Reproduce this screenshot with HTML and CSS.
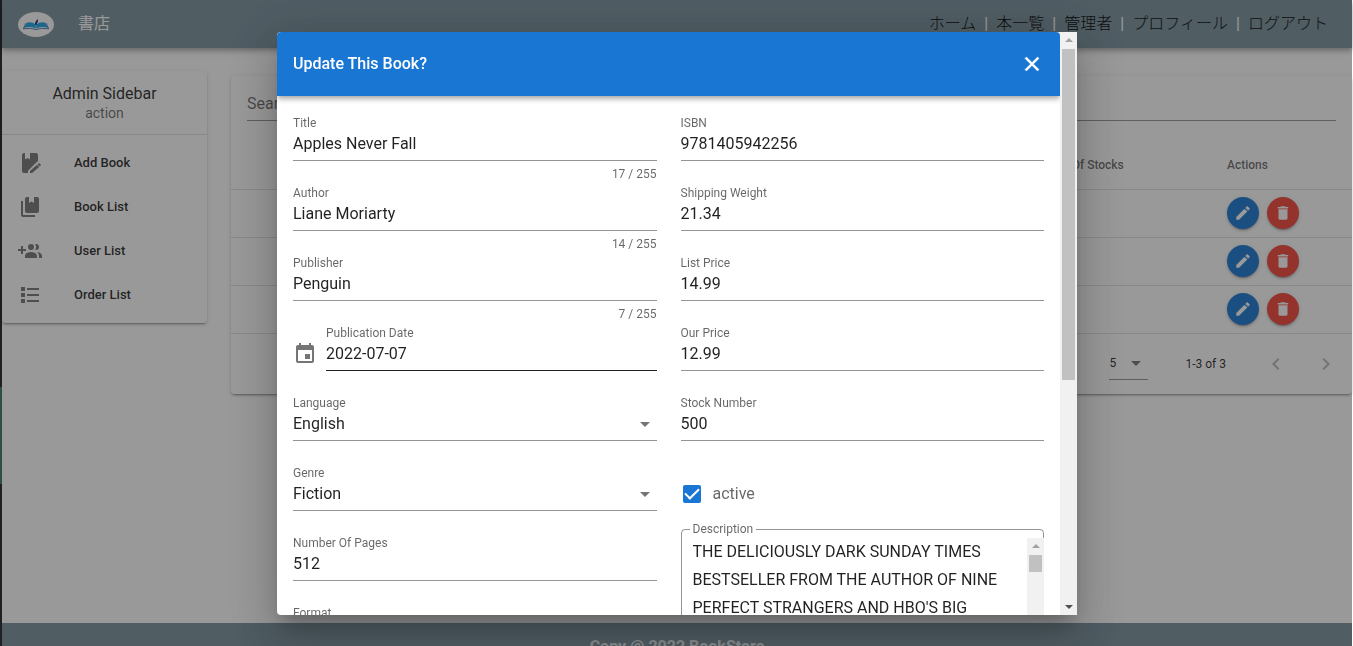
FILE: index.html
```html
<!DOCTYPE html>
<html lang="ja">
<head>
<meta charset="utf-8">
<title>書店</title>
<link rel="stylesheet" href="styles.css">
</head>
<body>
<svg class="sprite" aria-hidden="true">
  <symbol id="pencil" viewBox="0 0 24 24"><path d="M20.71,7.04C21.1,6.65 21.1,6 20.71,5.63L18.37,3.29C18,2.9 17.35,2.9 16.96,3.29L15.12,5.12L18.87,8.87M3,17.25V21H6.75L17.81,9.93L14.06,6.18L3,17.25Z"/></symbol>
  <symbol id="trash" viewBox="0 0 24 24"><path d="M19,4H15.5L14.5,3H9.5L8.5,4H5V6H19M6,19A2,2 0 0,0 8,21H16A2,2 0 0,0 18,19V7H6V19Z"/></symbol>
  <symbol id="caret" viewBox="0 0 24 24"><path d="M7,10L12,15L17,10H7Z"/></symbol>
</svg>
<div class="app">
  <header class="topbar">
    <svg class="logo" viewBox="0 0 36 25" aria-hidden="true">
      <ellipse cx="18" cy="12.5" rx="18" ry="12.5" fill="#fff"/>
      <path d="M9 10.500Q14 9.500 17.700 12.500V16.500Q12 14 6 16Z" fill="#16a5e6"/>
      <path d="M27 10.500Q22 9.500 18.300 12.500V16.500Q24 14 30 16Z" fill="#16a5e6"/>
      <path d="M8 11L5.300 16.800Q13 15.500 18 17.500Q23 15.500 30.700 16.800L28 11" fill="none" stroke="#2a5a9c" stroke-width="0.800"/>
      <path d="M17 13Q16.500 9.500 20 7Q20.500 10.500 18.300 13Z" fill="#1a2f86"/>
    </svg>
    <h1 class="brand">書店</h1>
    <nav class="nav">
      <a href="#">ホーム</a><span>|</span><a href="#">本一覧</a><span>|</span><a href="#">管理者</a><span>|</span><a href="#">プロフィール</a><span>|</span><a href="#">ログアウト</a>
    </nav>
  </header>

  <main class="main">
    <aside class="card sidebar">
      <div class="sidebar-head">
        <h2>Admin Sidebar</h2>
        <p>action</p>
      </div>
      <nav class="menu">
        <a href="#"><svg class="icon" viewBox="0 0 24 24"><path d="M6 2H7V8.500L9.500 7L12 8.500V2H18C19.100 2 20 2.900 20 4V10.200C19.500 10.300 19.100 10.600 18.800 10.900L10 19.700V22H6C4.900 22 4 21.100 4 20V4C4 2.900 4.900 2 6 2ZM22.700 14.400L21.700 15.400L19.600 13.300L20.600 12.300C20.800 12.100 21.200 12.100 21.400 12.300L22.700 13.600C22.900 13.800 22.900 14.100 22.700 14.400M12 19.900V22H14.100L21.200 15.900L19.100 13.800Z"/></svg>Add Book</a>
        <a href="#"><svg class="icon" viewBox="0 0 24 24"><path d="M3 6V20C3 21.100 3.900 22 5 22H17V20H5V6ZM9 2H11V8L13.500 6.500L16 8V2H19C20.100 2 21 2.900 21 4V16C21 17.100 20.100 18 19 18H9C7.900 18 7 17.100 7 16V4C7 2.900 7.900 2 9 2Z"/></svg>Book List</a>
        <a href="#"><svg class="icon" viewBox="0 0 24 24"><path d="M19 17V19H7V17S7 13 13 13 19 17 19 17M16 8A3 3 0 1 0 13 11A3 3 0 0 0 16 8M19.2 13.06A5.6 5.6 0 0 1 21 17V19H24V17S24 13.55 19.2 13.06M18 5A2.91 2.91 0 0 0 17.11 5.14A5 5 0 0 1 17.11 10.86A2.91 2.91 0 0 0 18 11A3 3 0 0 0 18 5M8 10H5V7H3V10H0V12H3V15H5V12H8Z"/></svg>User List</a>
        <a href="#"><svg class="icon" viewBox="0 0 24 24"><path d="M3,4H7V8H3V4M9,5V7H21V5H9M3,10H7V14H3V10M9,11V13H21V11H9M3,16H7V20H3V16M9,17V19H21V17H9"/></svg>Order List</a>
      </nav>
    </aside>

    <section class="card books">
      <div class="search"><input type="text" placeholder="Search" aria-label="Search"></div>
      <table class="table">
        <thead><tr><th></th><th class="col-stock">No. Of Stocks</th><th class="col-actions">Actions</th></tr></thead>
        <tbody>
          <tr><td></td><td></td><td><div class="actions"><button class="fab" aria-label="Edit"><svg><use href="#pencil"/></svg></button><button class="fab fab-red" aria-label="Delete"><svg><use href="#trash"/></svg></button></div></td></tr>
          <tr><td></td><td></td><td><div class="actions"><button class="fab" aria-label="Edit"><svg><use href="#pencil"/></svg></button><button class="fab fab-red" aria-label="Delete"><svg><use href="#trash"/></svg></button></div></td></tr>
          <tr><td></td><td></td><td><div class="actions"><button class="fab" aria-label="Edit"><svg><use href="#pencil"/></svg></button><button class="fab fab-red" aria-label="Delete"><svg><use href="#trash"/></svg></button></div></td></tr>
        </tbody>
      </table>
      <div class="pager">
        <div class="page-size"><select aria-label="Rows per page"><option>5</option></select><svg class="icon"><use href="#caret"/></svg></div>
        <span class="range">1-3 of 3</span>
        <button class="page-btn" aria-label="Previous page" disabled><svg class="icon" viewBox="0 0 24 24"><path d="M15.41,16.58L10.83,12L15.41,7.41L14,6L8,12L14,18L15.41,16.58Z"/></svg></button>
        <button class="page-btn" aria-label="Next page" disabled><svg class="icon" viewBox="0 0 24 24"><path d="M8.59,16.58L13.17,12L8.59,7.41L10,6L16,12L10,18L8.59,16.58Z"/></svg></button>
      </div>
    </section>
  </main>

  <footer class="footer">Copy @ 2022 BookStore</footer>
</div>

<div class="overlay">
  <div class="dialog" role="dialog" aria-modal="true" aria-labelledby="dialog-title">
    <div class="dialog-body">
      <div class="dialog-head">
        <h2 id="dialog-title">Update This Book?</h2>
        <button class="close" aria-label="Close"><svg viewBox="0 0 24 24"><path d="M19,6.41L17.59,5L12,10.59L6.41,5L5,6.41L10.59,12L5,17.59L6.41,19L12,13.41L17.59,19L19,17.59L13.41,12L19,6.41Z"/></svg></button>
      </div>
      <form class="form">
        <div class="form-col">
          <div class="field"><label for="title">Title</label><div class="control"><input id="title" type="text" value="Apples Never Fall"></div><div class="counter">17 / 255</div></div>
          <div class="field"><label for="author">Author</label><div class="control"><input id="author" type="text" value="Liane Moriarty"></div><div class="counter">14 / 255</div></div>
          <div class="field"><label for="publisher">Publisher</label><div class="control"><input id="publisher" type="text" value="Penguin"></div><div class="counter">7 / 255</div></div>
          <div class="dated">
            <svg class="icon" viewBox="0 0 24 24"><path d="M19,19H5V8H19M16,1V3H8V1H6V3H5C3.89,3 3,3.89 3,5V19A2,2 0 0,0 5,21H19A2,2 0 0,0 21,19V5C21,3.89 20.1,3 19,3H18V1M17,12H12V17H17V12Z"/></svg>
            <div class="field"><label for="date">Publication Date</label><div class="control control-active"><input id="date" type="text" value="2022-07-07" readonly></div></div>
          </div>
          <div class="field"><label for="language">Language</label><div class="control"><select id="language"><option>English</option></select><svg class="icon"><use href="#caret"/></svg></div></div>
          <div class="field"><label for="genre">Genre</label><div class="control"><select id="genre"><option>Fiction</option></select><svg class="icon"><use href="#caret"/></svg></div></div>
          <div class="field"><label for="pages">Number Of Pages</label><div class="control"><input id="pages" type="text" value="512"></div></div>
          <div class="field"><label for="format">Format</label><div class="control"><select id="format"><option></option></select><svg class="icon"><use href="#caret"/></svg></div></div>
        </div>
        <div class="form-col">
          <div class="field"><label for="isbn">ISBN</label><div class="control"><input id="isbn" type="text" value="9781405942256"></div></div>
          <div class="field"><label for="weight">Shipping Weight</label><div class="control"><input id="weight" type="text" value="21.34"></div></div>
          <div class="field"><label for="list-price">List Price</label><div class="control"><input id="list-price" type="text" value="14.99"></div></div>
          <div class="field"><label for="our-price">Our Price</label><div class="control"><input id="our-price" type="text" value="12.99"></div></div>
          <div class="field"><label for="stock">Stock Number</label><div class="control"><input id="stock" type="text" value="500"></div></div>
          <label class="check">
            <input type="checkbox" checked>
            active
          </label>
          <fieldset class="outlined">
            <legend><label for="description">Description</label></legend>
            <div class="outlined-body">
              <textarea id="description" rows="5">THE DELICIOUSLY DARK SUNDAY TIMES
BESTSELLER FROM THE AUTHOR OF NINE
PERFECT STRANGERS AND HBO'S BIG</textarea>
              <div class="scrollbar" aria-hidden="true"><i class="arrow-up"></i><i class="thumb thumb-short"></i></div>
            </div>
          </fieldset>
        </div>
      </form>
    </div>
    <div class="scrollbar" aria-hidden="true"><i class="arrow-up"></i><i class="thumb"></i><i class="arrow-down"></i></div>
  </div>
</div>
</body>
</html>
```
FILE: styles.css
```css
* { box-sizing: border-box; }

html { overflow: hidden; background: #fff; }

body {
  margin: 0;
  padding: 0 1px 0 2px;
  font: 400 16px/24px Roboto, "Noto Sans CJK JP", sans-serif;
  color: rgba(0, 0, 0, 0.87);
  background: linear-gradient(#1f2022 0 387px, #2f4f45 387px 484px, #1f2022 484px) left / 2px 100% no-repeat;
}

h1, h2, p { margin: 0; font-weight: 400; }

a { color: inherit; text-decoration: none; }

input, select, textarea, button {
  margin: 0;
  padding: 0;
  border: 0;
  border-radius: 0;
  outline: 0;
  background: none;
  color: inherit;
  font: inherit;
  appearance: none;
}

.sprite { position: absolute; width: 0; height: 0; }

.icon {
  flex: none;
  width: 24px;
  height: 24px;
  fill: rgba(0, 0, 0, 0.54);
  pointer-events: none;
}

.app {
  display: flex;
  flex-direction: column;
  min-height: calc(100vh + 24px);
  background: #fff;
}

.topbar {
  display: flex;
  align-items: center;
  height: 48px;
  padding: 0 24px 0 16px;
  background: #78909c;
  box-shadow: 0 2px 4px -1px rgba(0, 0, 0, 0.2), 0 4px 5px rgba(0, 0, 0, 0.14), 0 1px 10px rgba(0, 0, 0, 0.12);
}

.logo { width: 36px; height: 25px; }

.brand {
  flex: 1;
  margin-left: 24px;
  font-size: 16px;
  color: #fff;
}

.nav { display: flex; font-weight: 300; color: #000; }
.nav span { width: 20px; text-align: center; color: #fff; font-weight: 400; }

.main {
  flex: 1;
  display: flex;
  align-items: flex-start;
  gap: 24px;
  padding-top: 23px;
}

.card {
  border-radius: 4px;
  background: #fff;
  box-shadow: 0 3px 1px -2px rgba(0, 0, 0, 0.2), 0 2px 2px rgba(0, 0, 0, 0.14), 0 1px 5px rgba(0, 0, 0, 0.12);
}

.sidebar { flex: none; width: 205px; }

.sidebar-head {
  padding: 13px 0 12px;
  border-bottom: 1px solid rgba(0, 0, 0, 0.12);
  text-align: center;
}
.sidebar-head h2 { font-size: 16px; line-height: 20px; }
.sidebar-head p { font-size: 14px; line-height: 18px; color: rgba(0, 0, 0, 0.6); }

.menu { padding: 6px 0; }
.menu a {
  display: flex;
  align-items: center;
  gap: 32px;
  height: 44px;
  padding: 0 16px;
  font-size: 13px;
  font-weight: 500;
}

.books { flex: 1; margin-top: 5px; }

.search { padding: 10px 16px 20px; }
.search input {
  display: block;
  width: 100%;
  height: 35px;
  border-bottom: 1px solid rgba(0, 0, 0, 0.42);
}
.search input::placeholder { color: rgba(0, 0, 0, 0.6); opacity: 1; }

.table { width: 100%; border-collapse: collapse; table-layout: fixed; }
.table th {
  height: 48px;
  padding: 0 16px;
  border-bottom: 1px solid rgba(0, 0, 0, 0.12);
  text-align: left;
  font-size: 12px;
  font-weight: 500;
  color: rgba(0, 0, 0, 0.6);
}
.table td { height: 48px; padding: 0 16px; border-bottom: 1px solid rgba(0, 0, 0, 0.12); }
.col-stock { width: 177px; }
.col-actions { width: 141px; }

.actions { display: flex; gap: 8px; }

.fab {
  display: grid;
  place-items: center;
  width: 32px;
  height: 32px;
  border-radius: 50%;
  background: #1976d2;
  box-shadow: 0 3px 1px -2px rgba(0, 0, 0, 0.2), 0 2px 2px rgba(0, 0, 0, 0.14), 0 1px 5px rgba(0, 0, 0, 0.12);
}
.fab svg { width: 18px; height: 18px; fill: #fff; }
.fab-red { background: #f44336; }

.pager {
  display: flex;
  align-items: center;
  justify-content: flex-end;
  height: 60px;
  padding-right: 8px;
  font-size: 12px;
}
.page-size {
  display: flex;
  align-items: center;
  width: 39px;
  height: 33px;
  border-bottom: 1px solid rgba(0, 0, 0, 0.42);
}
.page-size select { flex: 1; min-width: 0; }
.range { margin: 0 32px 0 37px; }
.page-btn { display: grid; place-items: center; width: 36px; height: 36px; opacity: 0.5; }
.page-btn + .page-btn { margin-left: 14px; }

.footer {
  height: 47px;
  background: #78909c;
  color: rgba(255, 255, 255, 0.8);
  font-weight: 700;
  line-height: 48px;
  text-align: center;
}

.overlay {
  position: fixed;
  inset: 0 1px 0 2px;
  display: flex;
  justify-content: center;
  padding: 32px 24px 31px;
  background: rgba(33, 33, 33, 0.46);
}

.dialog {
  display: flex;
  width: 100%;
  max-width: 800px;
  border-radius: 4px 0 0 4px;
  background: #fff;
  overflow: hidden;
  box-shadow: 0 11px 15px -7px rgba(0, 0, 0, 0.2), 0 24px 38px 3px rgba(0, 0, 0, 0.14), 0 9px 46px 8px rgba(0, 0, 0, 0.12);
}

.dialog-body { flex: 1; min-width: 0; overflow: hidden; }

.dialog-head {
  display: flex;
  align-items: center;
  justify-content: space-between;
  height: 64px;
  padding: 0 16px;
  border-radius: 4px 4px 0 0;
  background: #1976d2;
  color: #fff;
  box-shadow: 0 2px 4px -1px rgba(0, 0, 0, 0.2), 0 4px 5px rgba(0, 0, 0, 0.14), 0 1px 10px rgba(0, 0, 0, 0.12);
}
.dialog-head h2 { font-size: 16px; font-weight: 500; }
.close { width: 24px; height: 24px; }
.close svg { display: block; fill: #fff; stroke: #fff; stroke-width: 0.5px; }

.form { display: flex; gap: 24px; padding: 19px 16px; }
.form-col { flex: 1; min-width: 0; }

.field { height: 70px; }
.field label {
  display: block;
  font-size: 12px;
  line-height: 16px;
  color: rgba(0, 0, 0, 0.6);
}
.control {
  display: flex;
  height: 30px;
  padding-bottom: 3px;
  border-bottom: 1px solid rgba(0, 0, 0, 0.42);
}
.control input, .control select { flex: 1; min-width: 0; }
.control .icon { margin-top: 1px; }
.control-active { border-color: rgba(0, 0, 0, 0.87); }
.counter {
  font-size: 12px;
  line-height: 26px;
  text-align: right;
  color: rgba(0, 0, 0, 0.6);
}

.dated { display: flex; gap: 9px; }
.dated .icon { margin-top: 17px; }
.dated .field { flex: 1; }

.check {
  display: flex;
  align-items: center;
  gap: 12px;
  height: 57px;
  padding-left: 2px;
  color: rgba(0, 0, 0, 0.6);
}
.check input {
  display: grid;
  place-items: center;
  width: 18px;
  height: 18px;
  border-radius: 2px;
  background: #1976d2;
}
.check input::before {
  content: "";
  width: 12px;
  height: 6px;
  margin-bottom: 4px;
  border: solid #fff;
  border-width: 0 0 2px 2px;
  transform: rotate(-45deg);
}

.outlined {
  min-width: 0;
  margin: 0;
  padding: 2px 0 0 11px;
  border: 1px solid rgba(0, 0, 0, 0.42);
  border-radius: 4px;
}
.outlined legend {
  margin-left: -3px;
  padding: 0 3px;
  font-size: 12px;
  line-height: 14px;
  color: rgba(0, 0, 0, 0.6);
}
.outlined-body { display: flex; margin-right: -1px; }
.outlined textarea { flex: 1; min-width: 0; line-height: 28px; resize: none; overflow: hidden; }

.scrollbar {
  flex: none;
  display: flex;
  flex-direction: column;
  align-items: center;
  width: 17px;
  padding: 6px 0;
  background: #f1f1f1;
}
.arrow-up { border: 4px solid transparent; border-top-width: 0; border-bottom-color: #a3a3a3; }
.arrow-down { margin-top: auto; border: 4px solid transparent; border-bottom-width: 0; border-top-color: #505050; }
.thumb { width: 13px; height: 58%; margin-top: 7px; background: #c1c1c1; }
.thumb-short { height: 17px; }
```
